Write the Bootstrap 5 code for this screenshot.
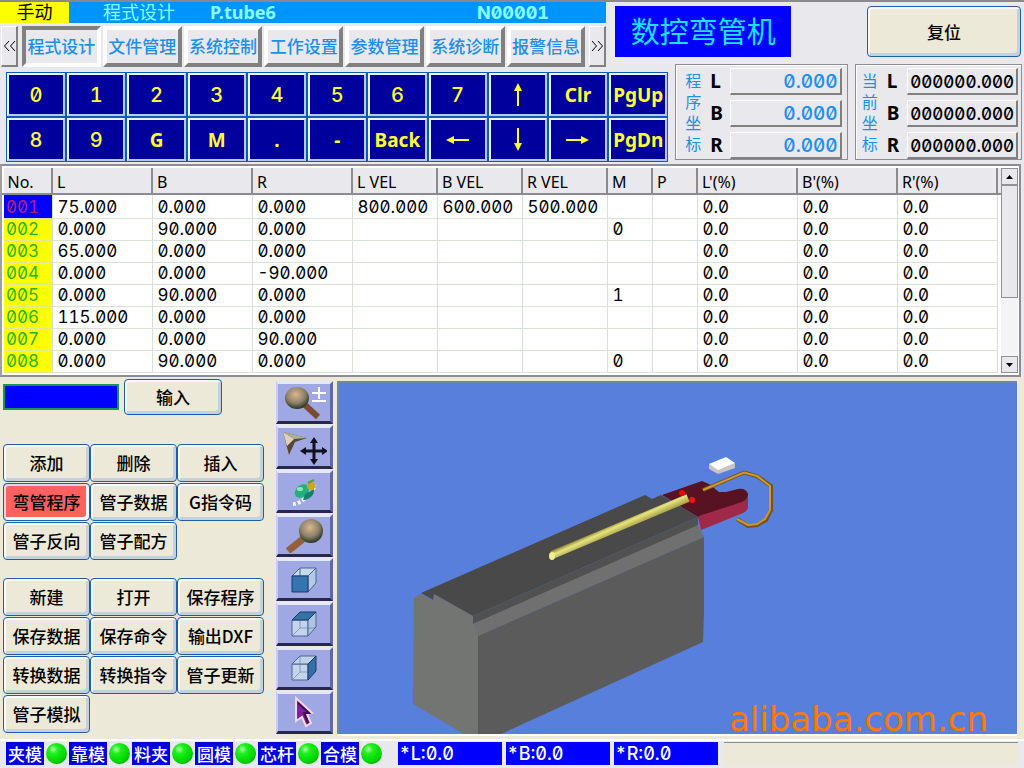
<!DOCTYPE html>
<html lang="zh-CN">
<head>
<meta charset="utf-8">
<meta name="viewport" content="width=device-width, initial-scale=1">
<title>数控弯管机</title>
<link href="https://cdn.jsdelivr.net/npm/bootstrap@5.3.0/dist/css/bootstrap.min.css" rel="stylesheet">
<style>
:root{--face:#e9e8ec;--cream:#ece9d8;--azure:#0094ff;--label:#1c90e8;--navy:#00009c;--edge:#1c5fa8}
body{background:var(--face);color:#000;font-family:"Noto Sans","Noto Sans CJK SC",sans-serif;font-size:17px;line-height:22px;border-top:2px solid #8c8890}
button{padding:0;color:#000;white-space:nowrap}
.digits{font-family:Inter,"Noto Sans CJK SC",sans-serif;font-feature-settings:"zero","tnum"}
/* title and tabs */
.masthead{padding-right:3px}
.mast-left{flex:607 1 0}
.logo-box{flex:176 1 0;margin:4px 0 10px 9px;background:#00f;color:#19e4ff;font-size:29px;height:51px}
.reset-box{flex:152 1 0;margin:4px 0 10px 76px}
.titlebar{background:var(--azure);color:#8ff;height:21px;line-height:21px;font-size:18px}
.mode-name{background:#ff0;color:#000;width:69px}
.title-page{width:141px;padding-left:34px}
.title-file{width:267px;font-weight:700}
.tabs-row{padding:3px 0 0 1px;height:44px}
.tab-key{flex:1 1 0;height:41px;background:var(--face);border:4px solid;border-color:#fff #808080 #808080 #fff;color:var(--label);font-size:17px;font-weight:500}
.tab-key.active{border-color:#808080 #fff #fff #808080}
.tab-scroll{width:17px;height:41px;background:var(--face);border:1px solid;border-color:#fff #808080 #808080 #fff;border-right-width:2px;border-bottom-width:2px}
.tab-scroll svg{display:block;margin:auto}
/* keypad */
.deck{padding:5px 2px 2px 6px;gap:7px}
.keypad{flex:661 1 0;display:grid;grid-template-columns:repeat(11,1fr);grid-auto-rows:45px}
.pad-key{background:var(--navy);color:#ff3;border:3px solid;border-color:#eef4ff #b4c8f0 #b4c8f0 #eef4ff;outline:1px solid #0b5cb4;outline-offset:-1px;font-size:19px;font-weight:700;min-width:0}
.pad-key.digits{font-weight:500;font-size:20px}
.pad-key svg{display:block;margin:auto}
.coord{flex:156 1 0;min-width:0;border:1px solid #8c8c94;box-shadow:inset 1px 1px #fff;margin-top:-8px;height:96px;padding:3px 5px 2px 9px}
.coord.actual{padding:3px 3px 2px 6px}
.coord-name{width:17px;flex:none;color:var(--label);font-size:16px;line-height:21px;padding-top:3px}
.coord dl{display:grid;grid-template-columns:20px 1fr;grid-auto-rows:28px;row-gap:4px;min-width:0}
.coord dt{font-size:19px;line-height:26px}
.coord dd{margin:0;height:27px;border:1px solid;border-color:#fff #808080 #808080 #fff;border-width:1px 2px 2px 1px;font-size:19px;line-height:26px;overflow:hidden;font-weight:500;min-width:0;padding-right:2px}
.coord.program dd{color:#1c90f0}
.coord.actual dd{font-size:17px}
/* data grid */
.sheet{background:#fff;border:2px solid;border-color:#8c8c94 #8c8c94 #8c8c94 #a0a0a0;margin-right:3px;padding:2px 2px 2px 0;height:213px}
.sheet table{table-layout:fixed;width:100%;margin:0}
.sheet th{background:var(--face);height:26px;padding:2px 4px 0;font-weight:400;font-size:16px;line-height:22px;border-right:2px solid #8c8c90;border-bottom:2px solid #8c8c90;border-left:1px solid #fff;white-space:nowrap}
.sheet tbody tr:first-child td{padding-top:2px}
.sheet td{padding:0 0 0 5px;line-height:21px;font-size:17px;border:solid #d8e0d8;border-width:0 1px 1px 0;white-space:nowrap}
.sheet td.stepno{background:#ff0;background-clip:padding-box;color:#28b428;padding-left:2px;border-color:#ff0 #d8e0d8 #e0e890;border-left:2px solid #fff}
.sheet tr.current td.stepno{background:#00f;color:#b0207c}
.c-no{width:49px}.c-wide{width:100px}.c-vel{width:85px}.c-flag{width:45px}.c-end{width:4px}
.sheet th.th-end{padding:0;border-right:0}
.scroller{width:17px;flex:none;background:#f4f3f5}
.scroller button{height:17px;background:var(--face);border:1px solid #909098;display:flex;align-items:center;justify-content:center}
.thumb{height:113px;background:var(--face);border:1px solid #909098}
/* work area */
.workarea{background:var(--cream);padding:2px 7px 5px 3px;flex:1 0 auto}
.commands{flex:0 0 261px;margin-right:12px}
.xp{background:var(--cream);border:1px solid var(--edge);border-radius:4px;box-shadow:inset 2px 2px #f6faff,inset -3px -3px #c4d0dc;font-family:"Noto Sans CJK SC",sans-serif;font-size:17px;font-weight:500;line-height:20px}
.xp.chosen{background:#ff6060;box-shadow:inset 2px 2px #d8d8e8,inset -3px -3px #f4f8ff}
.entry{width:116px;height:26px;background:#00f;border:2px solid #1a9650;border-radius:0;color:#fff;padding:0 4px;margin-top:5px}
.enter{width:98px;height:36px;margin-left:5px}
.cmd-grid{display:grid;grid-template-columns:repeat(3,1fr);grid-auto-rows:38px;row-gap:1px}
.cmd-edit{margin-top:29px}
.cmd-file{margin-top:18px}
.tools{flex:0 0 57px;display:grid;grid-template-rows:repeat(8,1fr);row-gap:1px;margin-right:4px;padding-top:2px}
.tools button{background:#a0a8e4;border:solid;border-width:3px 3px 3px 2px;border-color:#e4e8fc #6068a0 #25284c #c8ccf0}
.tools svg{display:block;margin:auto}
.viewer{flex:1 1 0;min-width:0;background:#587fdc;border:solid;border-width:2px 0 0 2px;border-color:#7484a8;margin-top:2px;min-height:353px;box-shadow:0 2px #fff}
.viewer svg{position:absolute;inset:0;width:100%;height:100%}
.watermark{position:absolute;right:29px;bottom:-5px;color:#ff7800;font-family:"DejaVu Sans",sans-serif;font-size:34px;line-height:40px}
/* status bar */
.status{border-top:2px solid #fff;padding:1px 6px 3px 6px;height:29px;color:#fff;line-height:23px}
.axis-tag{background:#0000dc;width:38px;height:23px;text-align:center;font-size:17px;font-family:"Noto Sans CJK SC",sans-serif;font-weight:500;white-space:nowrap}
.lamp{width:21px;height:21px;border-radius:50%;background:radial-gradient(circle at 35% 30%,#b0ffa0 0,#20f020 22%,#00d800 60%,#008a00 100%);margin:0 2px}
.readout{background:#00f;width:104px;height:23px;margin-right:4px;padding-left:1px;font-size:18px;font-weight:500}
.blank-well{background:var(--cream);border-top:1px solid #909090;height:24px;margin-left:2px}
</style>
</head>
<body class="d-flex flex-column min-vh-100 overflow-x-hidden">
<header class="masthead d-flex">
  <div class="mast-left">
    <div class="titlebar d-flex">
      <span class="mode-name text-center">手动</span>
      <span class="title-page text-nowrap">程式设计</span>
      <span class="title-file">P.tube6</span>
      <span class="digits fw-bold">N00001</span>
    </div>
    <nav class="tabs-row d-flex">
      <button class="tab-scroll me-1" aria-label="向左"><svg width="13" height="12" fill="none" stroke="#000"><path d="M6 1L1.500 6L6 11M12 1L7.500 6L12 11"/></svg></button>
      <div class="d-flex flex-fill" style="gap:2px">
        <button class="tab-key active">程式设计</button>
        <button class="tab-key">文件管理</button>
        <button class="tab-key">系统控制</button>
        <button class="tab-key">工作设置</button>
        <button class="tab-key">参数管理</button>
        <button class="tab-key">系统诊断</button>
        <button class="tab-key">报警信息</button>
      </div>
      <button class="tab-scroll ms-1" aria-label="向右"><svg width="13" height="12" fill="none" stroke="#000"><path d="M1 1L5.500 6L1 11M7 1L11.500 6L7 11"/></svg></button>
    </nav>
  </div>
  <div class="logo-box d-flex align-items-center justify-content-center text-nowrap">数控弯管机</div>
  <button class="xp reset-box">复位</button>
</header>

<section class="deck d-flex">
  <div class="keypad">
    <button class="pad-key digits">0</button><button class="pad-key digits">1</button><button class="pad-key digits">2</button><button class="pad-key digits">3</button><button class="pad-key digits">4</button><button class="pad-key digits">5</button><button class="pad-key digits">6</button><button class="pad-key digits">7</button>
    <button class="pad-key" aria-label="上"><svg width="10" height="24"><path d="M5 0L9 8H6V23H4V8H1Z" fill="#ff3"/></svg></button>
    <button class="pad-key">Clr</button><button class="pad-key">PgUp</button>
    <button class="pad-key digits">8</button><button class="pad-key digits">9</button><button class="pad-key">G</button><button class="pad-key">M</button><button class="pad-key">.</button><button class="pad-key">-</button><button class="pad-key">Back</button>
    <button class="pad-key" aria-label="左"><svg width="24" height="10"><path d="M0 5L8 1V4H23V6H8V9Z" fill="#ff3"/></svg></button>
    <button class="pad-key" aria-label="下"><svg width="10" height="24"><path d="M5 23L1 15H4V0H6V15H9Z" fill="#ff3"/></svg></button>
    <button class="pad-key" aria-label="右"><svg width="24" height="10"><path d="M23 5L15 1V4H0V6H15V9Z" fill="#ff3"/></svg></button>
    <button class="pad-key">PgDn</button>
  </div>
  <section class="coord program d-flex">
    <div class="coord-name">程序坐标</div>
    <dl class="flex-fill mb-0 ms-2">
      <dt>L</dt><dd class="digits d-flex justify-content-end">0.000</dd>
      <dt>B</dt><dd class="digits d-flex justify-content-end">0.000</dd>
      <dt>R</dt><dd class="digits d-flex justify-content-end">0.000</dd>
    </dl>
  </section>
  <section class="coord actual d-flex">
    <div class="coord-name">当前坐标</div>
    <dl class="flex-fill mb-0 ms-2">
      <dt>L</dt><dd class="digits d-flex justify-content-end">000000.000</dd>
      <dt>B</dt><dd class="digits d-flex justify-content-end">000000.000</dd>
      <dt>R</dt><dd class="digits d-flex justify-content-end">000000.000</dd>
    </dl>
  </section>
</section>

<section class="sheet d-flex">
  <table>
    <colgroup><col class="c-no"><col class="c-wide"><col class="c-wide"><col class="c-wide"><col class="c-vel"><col class="c-vel"><col class="c-vel"><col class="c-flag"><col class="c-flag"><col class="c-wide"><col class="c-wide"><col class="c-wide"><col class="c-end"></colgroup>
    <thead><tr><th>No.</th><th>L</th><th>B</th><th>R</th><th>L VEL</th><th>B VEL</th><th>R VEL</th><th>M</th><th>P</th><th>L'(%)</th><th>B'(%)</th><th>R'(%)</th><th class="th-end"></th></tr></thead>
    <tbody class="digits">
      <tr class="current"><td class="stepno">001</td><td>75.000</td><td>0.000</td><td>0.000</td><td>800.000</td><td>600.000</td><td>500.000</td><td></td><td></td><td>0.0</td><td>0.0</td><td>0.0</td></tr>
      <tr><td class="stepno">002</td><td>0.000</td><td>90.000</td><td>0.000</td><td></td><td></td><td></td><td>0</td><td></td><td>0.0</td><td>0.0</td><td>0.0</td></tr>
      <tr><td class="stepno">003</td><td>65.000</td><td>0.000</td><td>0.000</td><td></td><td></td><td></td><td></td><td></td><td>0.0</td><td>0.0</td><td>0.0</td></tr>
      <tr><td class="stepno">004</td><td>0.000</td><td>0.000</td><td>-90.000</td><td></td><td></td><td></td><td></td><td></td><td>0.0</td><td>0.0</td><td>0.0</td></tr>
      <tr><td class="stepno">005</td><td>0.000</td><td>90.000</td><td>0.000</td><td></td><td></td><td></td><td>1</td><td></td><td>0.0</td><td>0.0</td><td>0.0</td></tr>
      <tr><td class="stepno">006</td><td>115.000</td><td>0.000</td><td>0.000</td><td></td><td></td><td></td><td></td><td></td><td>0.0</td><td>0.0</td><td>0.0</td></tr>
      <tr><td class="stepno">007</td><td>0.000</td><td>0.000</td><td>90.000</td><td></td><td></td><td></td><td></td><td></td><td>0.0</td><td>0.0</td><td>0.0</td></tr>
      <tr><td class="stepno">008</td><td>0.000</td><td>90.000</td><td>0.000</td><td></td><td></td><td></td><td>0</td><td></td><td>0.0</td><td>0.0</td><td>0.0</td></tr>
    </tbody>
  </table>
  <div class="scroller d-flex flex-column">
    <button aria-label="上滚"><svg width="7" height="4"><path d="M0 4L3.500 0L7 4Z"/></svg></button>
    <div class="thumb"></div>
    <button class="mt-auto" aria-label="下滚"><svg width="7" height="4"><path d="M0 0L3.500 4L7 0Z"/></svg></button>
  </div>
</section>

<main class="workarea d-flex">
  <div class="commands">
    <div class="d-flex align-items-start">
      <input class="entry" type="text" aria-label="输入值">
      <button class="xp enter">输入</button>
    </div>
    <div class="cmd-grid cmd-edit">
      <button class="xp">添加</button><button class="xp">删除</button><button class="xp">插入</button>
      <button class="xp chosen">弯管程序</button><button class="xp">管子数据</button><button class="xp">G指令码</button>
      <button class="xp">管子反向</button><button class="xp">管子配方</button>
    </div>
    <div class="cmd-grid cmd-file">
      <button class="xp">新建</button><button class="xp">打开</button><button class="xp">保存程序</button>
      <button class="xp">保存数据</button><button class="xp">保存命令</button><button class="xp">输出DXF</button>
      <button class="xp">转换数据</button><button class="xp">转换指令</button><button class="xp">管子更新</button>
      <button class="xp">管子模拟</button>
    </div>
  </div>

  <div class="tools">
    <button aria-label="缩放"><svg width="46" height="36" viewBox="0 0 46 36"><defs><radialGradient id="lens" cx=".45" cy=".35" r=".65"><stop offset="0" stop-color="#d8b890"/><stop offset=".6" stop-color="#8c8068"/><stop offset="1" stop-color="#283420"/></radialGradient></defs><path d="M24 20L37 32" stroke="#7c4a30" stroke-width="6"/><ellipse cx="16" cy="13" rx="12" ry="11" fill="url(#lens)"/><path d="M31 8H45M38 2V14M31 16H45" stroke="#fff" stroke-width="2"/></svg></button>
    <button aria-label="平移"><svg width="46" height="36" viewBox="0 0 46 36"><path d="M2 3L26 9L14 13L8 26Z" fill="#5c4634"/><path d="M2 3L26 9L13 10Z" fill="#a4b88c"/><path d="M2 3L13 10L6 17Z" fill="#e0d0c0"/><path d="M33 12V32M22 22H44" stroke="#101020" stroke-width="3"/><path d="M33 8l4 6h-8zM33 36l4-6h-8zM19 22l6-4v8zM47 22l-6-4v8z" fill="#101020"/></svg></button>
    <button aria-label="旋转"><svg width="46" height="36" viewBox="0 0 46 36"><path d="M12 31C18 31 29 24 34 12" stroke="#eafcff" stroke-width="4" stroke-dasharray="3 2" fill="none"/><ellipse cx="21" cy="18" rx="8" ry="6" transform="rotate(-38 21 18)" fill="#24b07c"/><ellipse cx="19" cy="16" rx="3" ry="2" fill="#90e8b8"/><path d="M22 27C30 27 34 20 33 16L24 21Z" fill="#168070"/><ellipse cx="30" cy="13" rx="4" ry="4" fill="#cca820"/><path d="M27 10L33 7" stroke="#5c9840" stroke-width="2"/></svg></button>
    <button aria-label="查看"><svg width="46" height="36" viewBox="0 0 46 36"><path d="M22 22L7 34" stroke="#94603c" stroke-width="7"/><ellipse cx="30" cy="14" rx="12" ry="12" fill="url(#lens)"/></svg></button>
    <button aria-label="前视图"><svg width="28" height="28" viewBox="0 0 28 28" stroke="#48688c"><path d="M2 10L10 2H26L18 10Z" fill="#c8d8ee"/><path d="M18 10L26 2V17L18 26Z" fill="#b4c8e8"/><path d="M10 2V10" /><path d="M2 10H18V26H2Z" fill="#3474b0" stroke="#183c68"/></svg></button>
    <button aria-label="顶视图"><svg width="28" height="28" viewBox="0 0 28 28" stroke="#48688c"><path d="M2 10H18V26H2Z" fill="#c4d4ec"/><path d="M18 10L26 2V17L18 26Z" fill="#b0c4e4"/><path d="M2 10L10 2H26L18 10Z" fill="#3474a4" stroke="#183c68"/><path d="M2 26L10 18H25M10 10V18" opacity=".5" fill="none"/></svg></button>
    <button aria-label="侧视图"><svg width="28" height="28" viewBox="0 0 28 28" stroke="#48688c"><path d="M2 10H18V26H2Z" fill="#c4d4ec"/><path d="M2 10L10 2H26L18 10Z" fill="#c0d0ec"/><path d="M18 10L26 2V17L18 26Z" fill="#3470a4" stroke="#183c68"/><path d="M2 26L10 18H18M10 2V18" opacity=".5" fill="none"/></svg></button>
    <button aria-label="选择"><svg width="22" height="32" viewBox="0 0 22 32"><path d="M3 2L19 17L14 18L18 27L13 30L9 21L3 25Z" fill="#8020a0" stroke="#f0dcd8" stroke-width="2"/><path d="M5 7L16 17L11 17L15 27" stroke="#401050" stroke-width="2" fill="none"/></svg></button>
  </div>

  <div class="viewer position-relative">
    <svg viewBox="339 383 678 351" role="img" aria-label="弯管机三维模型">
      <defs><linearGradient id="rod" gradientUnits="userSpaceOnUse" x1="618" y1="522" x2="622" y2="531"><stop offset="0" stop-color="#98943c"/><stop offset=".35" stop-color="#e8e480"/><stop offset="1" stop-color="#a8a448"/></linearGradient></defs>
      <path fill="#737573" d="M414 598L421 594L433 601L434 594L473 616V624L478 636V734H464L413 704Z"/>
      <path fill="#494949" d="M421 593L645 495L652 499L661 495L698 517L473 616L434 594L433 600Z"/>
      <path fill="#515151" d="M473 616L698 517V526L473 624Z"/>
      <path fill="#707070" d="M473 624L698 525L704 537L478 636Z"/>
      <path fill="#5b5b5b" d="M478 636L704 537V612L703 642L501 734H478Z"/>
      <path fill="#a02848" d="M698 517L748 493V508Q747 511 743 513L701 530Z"/>
      <path fill="#571322" d="M662 495L702 481L709 484L719 492H726L738 489Q746 488 748 494Q748 499 742 502L702 515L698 517Z"/>
      <path fill="#444" d="M661 495L678 505L698 517L690 512Z"/>
      <path d="M552 555L688 498" stroke="url(#rod)" stroke-width="8"/>
      <ellipse cx="552" cy="556" rx="3" ry="4" fill="#f0f090"/>
      <circle cx="682" cy="493" r="3" fill="#f00000"/><circle cx="692" cy="500" r="3" fill="#ff1010"/>
      <path d="M703 490L744 472.500L757 476L771 486V510L766 520L757 525L748 526L737 519" fill="none" stroke="#6e5526" stroke-width="4"/>
      <path d="M703 490L744 472.500L757 476L770 486V510L765 519L757 524L748 525L737 519" fill="none" stroke="#d09830" stroke-width="2"/>
      <path fill="#c8c4c4" d="M709 464V469L718 474L735 468V463L718 469Z"/><path fill="#fff" d="M709 464L726 457L735 463L718 470Z"/>
    </svg>
    <div class="watermark">alibaba.com.cn</div>
  </div>
</main>

<footer class="status d-flex align-items-center">
  <span class="axis-tag">夹模</span><span class="lamp"></span>
  <span class="axis-tag">靠模</span><span class="lamp"></span>
  <span class="axis-tag">料夹</span><span class="lamp"></span>
  <span class="axis-tag">圆模</span><span class="lamp"></span>
  <span class="axis-tag">芯杆</span><span class="lamp"></span>
  <span class="axis-tag">合模</span><span class="lamp me-3"></span>
  <span class="readout digits">*L:0.0</span><span class="readout digits">*B:0.0</span><span class="readout digits">*R:0.0</span>
  <span class="blank-well flex-fill"></span>
</footer>
<script src="https://cdn.jsdelivr.net/npm/bootstrap@5.3.0/dist/js/bootstrap.bundle.min.js"></script>
</body>
</html>
